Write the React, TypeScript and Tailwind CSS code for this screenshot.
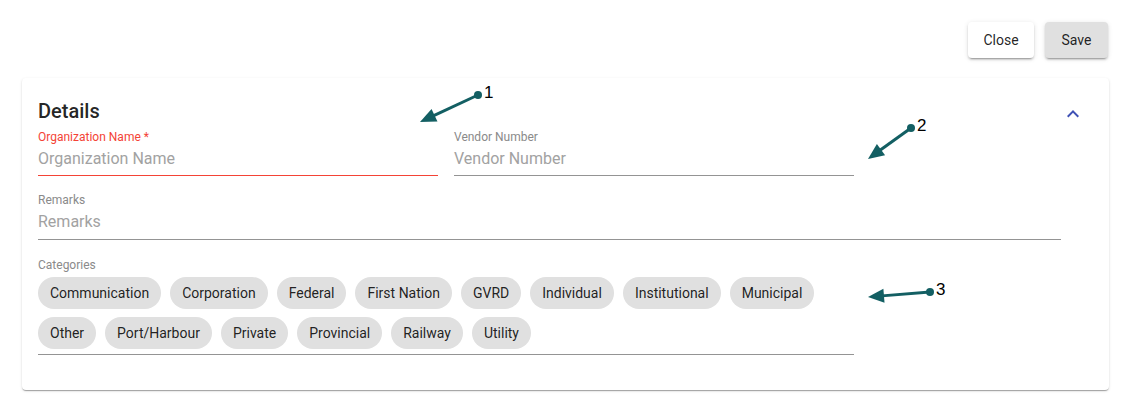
import React from "react";

const chipsRow1 = ["Communication", "Corporation", "Federal", "First Nation", "GVRD", "Individual", "Institutional", "Municipal"];
const chipsRow2 = ["Other", "Port/Harbour", "Private", "Provincial", "Railway", "Utility"];

function Chip({ label }: { label: string }) {
  return (
    <div className="h-8 px-3 rounded-full bg-[#e0e0e0] text-[14px] text-[rgba(0,0,0,0.87)] flex items-center">{label}</div>
  );
}

function Arrow({ x1, y1, x2, y2, label }: { x1: number; y1: number; x2: number; y2: number; label: string }) {
  const dx = x2 - x1, dy = y2 - y1;
  const len = Math.sqrt(dx * dx + dy * dy);
  const ux = dx / len, uy = dy / len;
  const px = -uy, py = ux;
  const hl = 16, hw = 7;
  const bx = x2 - ux * hl, by = y2 - uy * hl;
  const pts = `${x2},${y2} ${bx + px * hw},${by + py * hw} ${bx - px * hw},${by - py * hw}`;
  return (
    <g>
      <line x1={x1} y1={y1} x2={bx + ux * 2} y2={by + uy * 2} stroke="#135f63" strokeWidth={3} />
      <polygon points={pts} fill="#135f63" />
      <circle cx={x1} cy={y1} r={4} fill="#135f63" />
      <text x={x1 + 6} y={y1 + 3} fontSize={17} fontFamily="Liberation Sans, Arial, sans-serif" fill="#000">{label}</text>
    </g>
  );
}

export default function App() {
  return (
    <div className="relative w-[1131px] h-[395px] bg-white font-['Roboto',sans-serif] overflow-hidden">
      <div className="flex justify-end gap-[11px] pt-[22px] pr-[23px]">
        <button className="h-9 w-[66px] rounded bg-white text-[14px] font-normal text-[rgba(0,0,0,0.87)] shadow-[0_3px_1px_-2px_rgba(0,0,0,0.2),0_2px_2px_0_rgba(0,0,0,0.14),0_1px_5px_0_rgba(0,0,0,0.12)]">Close</button>
        <button className="h-9 w-[63px] rounded bg-[#e0e0e0] text-[14px] font-normal text-[rgba(0,0,0,0.87)] shadow-[0_3px_1px_-2px_rgba(0,0,0,0.2),0_2px_2px_0_rgba(0,0,0,0.14),0_1px_5px_0_rgba(0,0,0,0.12)]">Save</button>
      </div>
      <div className="mt-[20px] ml-[22px] w-[1087px] h-[312px] rounded bg-white shadow-[0_2px_1px_-1px_rgba(0,0,0,0.2),0_1px_1px_0_rgba(0,0,0,0.14),0_1px_3px_0_rgba(0,0,0,0.12)] pt-[17px] px-4">
        <div className="flex items-center justify-between h-8">
          <div className="text-[20px] font-medium text-[rgba(0,0,0,0.87)] leading-8">Details</div>
          <svg width="24" height="24" viewBox="0 0 24 24" className="mr-[8px] mt-[6px]">
            <path d="M7.41 15.41L12 10.83l4.59 4.58L18 14l-6-6-6 6z" fill="#3f51b5" />
          </svg>
        </div>
        <div className="flex gap-4 mt-[2px]">
          <div className="w-[400px] border-b border-[#f44336] pb-1">
            <div className="text-[12px] leading-4 text-[#f44336]">Organization Name *</div>
            <div className="mt-[2px] text-[16px] leading-6 text-[#a2a2a2]">Organization Name</div>
          </div>
          <div className="w-[400px] border-b border-[#949494] pb-1">
            <div className="text-[12px] leading-4 text-[#8a8a8a]">Vendor Number</div>
            <div className="mt-[2px] text-[16px] leading-6 text-[#a2a2a2]">Vendor Number</div>
          </div>
        </div>
        <div className="w-[1023px] border-b border-[#949494] pb-[5px] mt-4">
          <div className="text-[12px] leading-4 text-[#8a8a8a]">Remarks</div>
          <div className="mt-[2px] text-[16px] leading-6 text-[#a2a2a2]">Remarks</div>
        </div>
        <div className="w-[816px] border-b border-[#949494] pb-[5px] mt-[17px]">
          <div className="text-[12px] leading-4 text-[#8a8a8a]">Categories</div>
          <div className="mt-[4px] flex flex-col gap-2">
            <div className="flex gap-[9px]">{chipsRow1.map((c) => <Chip key={c} label={c} />)}</div>
            <div className="flex gap-[9px]">{chipsRow2.map((c) => <Chip key={c} label={c} />)}</div>
          </div>
        </div>
      </div>
      <svg className="absolute left-0 top-0 pointer-events-none" width="1131" height="395">
        <Arrow x1={478} y1={95} x2={420} y2={122} label="1" />
        <Arrow x1={911} y1={128} x2={868} y2={159} label="2" />
        <Arrow x1={930} y1={292} x2={868} y2={297} label="3" />
      </svg>
    </div>
  );
}
